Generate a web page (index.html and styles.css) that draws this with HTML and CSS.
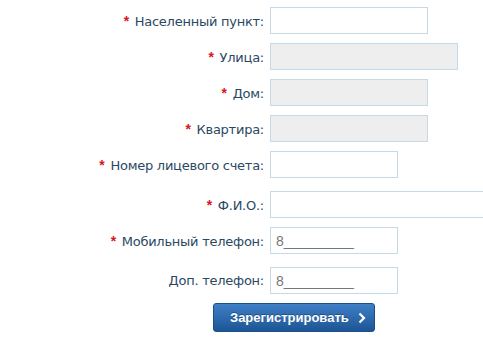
FILE: index.html
```html
<!DOCTYPE html>
<html>
<head>
    <title>Регистрация</title>
    <meta charset="UTF-8">
    <link rel="stylesheet" href="styles.css">
</head>
<body>

<form class="reg-form">
    <div class="row">
        <label for="city"><span class="req">*</span> Населенный пункт:</label>
        <input type="text" id="city" class="w-158">
    </div>
    <div class="row">
        <label for="street"><span class="req">*</span> Улица:</label>
        <input type="text" id="street" class="w-188" disabled>
    </div>
    <div class="row">
        <label for="house"><span class="req">*</span> Дом:</label>
        <input type="text" id="house" class="w-158" disabled>
    </div>
    <div class="row">
        <label for="flat"><span class="req">*</span> Квартира:</label>
        <input type="text" id="flat" class="w-158" disabled>
    </div>
    <div class="row">
        <label for="account"><span class="req">*</span> Номер лицевого счета:</label>
        <input type="text" id="account" class="w-128">
    </div>
    <div class="row spaced">
        <label for="fio"><span class="req">*</span> Ф.И.О.:</label>
        <input type="text" id="fio" class="w-wide">
    </div>
    <div class="row">
        <label for="phone"><span class="req">*</span> Мобильный телефон:</label>
        <input type="text" id="phone" class="w-128" value="8_________">
    </div>
    <div class="row spaced">
        <label for="phone2">Доп. телефон:</label>
        <input type="text" id="phone2" class="w-128" value="8_________">
    </div>
    <div class="actions">
        <button type="submit" class="button">
            Зарегистрировать
            <svg class="chevron" width="8" height="12" viewBox="0 0 8 12">
                <path d="M1.5 1.5 L6 6 L1.5 10.5" fill="none" stroke="#fff" stroke-width="2.2"/>
            </svg>
        </button>
    </div>
</form>

</body>
</html>
```

FILE: styles.css
```css
body {
    margin: 0;
    padding: 0;
    background: white;
    font-family: "DejaVu Sans", Verdana, sans-serif;
    overflow: hidden;
}

.reg-form {
    padding-top: 7px;
    display: flex;
    flex-direction: column;
    gap: 9px;
}

.row {
    display: flex;
    align-items: center;
    gap: 6px;
}

.row.spaced {
    margin-top: 4px;
}

.row label {
    width: 264px;
    flex-shrink: 0;
    text-align: right;
    font-size: 13px;
    letter-spacing: -0.25px;
    color: #2b4863;
    white-space: nowrap;
}

.req {
    color: #d8141c;
    font-family: "Liberation Sans", Arial, sans-serif;
    font-size: 14px;
    font-weight: bold;
    margin-right: 2px;
}

input {
    box-sizing: border-box;
    height: 27px;
    flex-shrink: 0;
    border: 1px solid #c5dae6;
    background: white;
    padding: 0 5px;
    font-family: "Liberation Sans", Arial, sans-serif;
    font-size: 14px;
    color: #777;
    outline: none;
}

input:disabled {
    background: #eeeeee;
}

.w-128 { width: 128px; }
.w-158 { width: 158px; }
.w-188 { width: 188px; }

.w-wide {
    width: 213px;
    border-right: 0;
}

.actions {
    padding-left: 213px;
}

.button {
    box-sizing: border-box;
    width: 162px;
    height: 29px;
    display: flex;
    align-items: center;
    justify-content: space-between;
    padding: 0 8px 0 16px;
    background: linear-gradient(#3f7fc6, #1c5595);
    border: 1px solid #1b4f8b;
    border-radius: 3px;
    color: white;
    font-family: "Liberation Sans", Arial, sans-serif;
    font-size: 13px;
    font-weight: bold;
    text-shadow: 0 -1px 0 rgba(0, 0, 0, 0.3);
    cursor: pointer;
}

.chevron {
    display: block;
}
```
